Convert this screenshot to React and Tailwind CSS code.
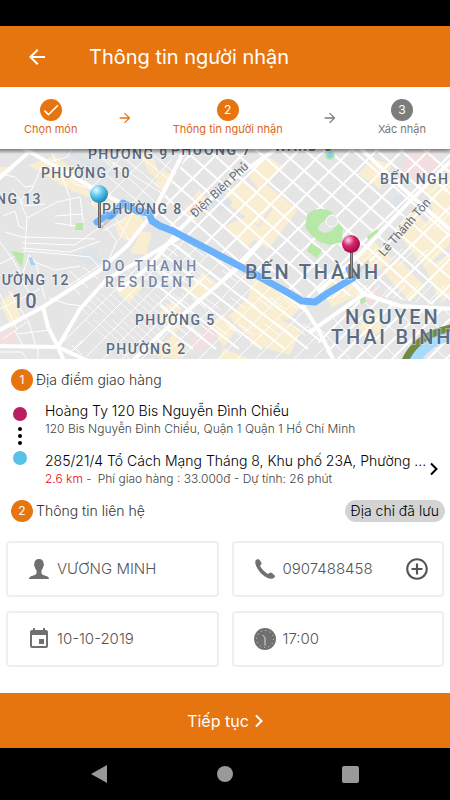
import React, { useState } from 'react';
import { MdAddCircleOutline, MdArrowBack, MdArrowForward, MdCheck, MdEvent } from 'react-icons/md';

// ==========================================
// 1. MAP DATA
// ==========================================
const ROUTE = 'M97 73 L107 66 L111 67 L123 54 L137 62 L149 64 L152 72 L160 77 L173 82 L247 121 L285 142 L302 152 L315 153 L328 144 L353 129 L349 120';

const MAIN_ROADS = [
    'M18 -4 L100 43 L123 55 L150 68',
    'M-4 183 L43 158 L100 121 L128 96 L142 78 L152 66 L188 -6',
    'M43 158 L48 178 L58 198 L64 212',
    'M-4 197 L58 198 L88 212',
    'M58 198 L80 160 L107 130 L148 107 L180 88',
    'M-4 32 L30 2',
    'M285 -6 L228 33 L180 80 L150 117 L118 142',
    'M128 216 L166 180 L240 117 L262 92',
    'M455 8 L408 54 L358 107 L318 143',
    'M302 155 L318 180 L336 216',
    'M310 183 L364 145 L400 157 L455 160',
    'M364 145 L345 125',
    'M355 -6 L400 37 L455 85',
];

const MINOR_ROADS = [
    'M0 115 L25 102 L60 105 L90 108 L99 118',
    'M25 102 L27 69 L20 52 L32 40 L42 17 L62 22',
    'M5 83 L22 88 L95 90 M22 94 L75 96 L100 78 M22 99 L70 103 L100 92',
    'M57 53 L80 48 L84 79 M55 67 L83 65 M55 74 L83 78 M70 51 L71 78 M27 69 L57 53',
    'M0 25 L15 28 L25 38 L33 37 M3 67 L15 62 L19 77 L25 80 M12 40 L25 57 L45 55',
    'M62 22 L75 35 L90 40 L93 55 M45 14 L67 8 L74 -4 M52 4 L60 22 L70 49',
    'M0 93 L13 111 L22 127 L29 106 M29 106 L37 114 L55 121 L80 117',
    'M0 145 L17 180 M9 142 L27 171 M20 128 L38 160 M36 114 L45 150 M0 160 L40 140',
    'M15 182 L23 197 M28 171 L36 197 M3 190 L27 173 M17 185 L50 181',
    'M60 125 L80 146 M70 122 L88 139 M83 118 L98 130 M65 139 L105 113 M49 149 L67 155 L82 157',
    'M103 23 L150 63 M112 13 L168 48 M97 4 L111 17 M90 40 L134 -4 M107 48 L154 1 M128 59 L172 10',
    'M97 0 L154 52 M116 2 L159 38 M132 0 L168 30 M146 0 L176 25',
    'M101 73 L117 92 L108 112 M116 70 L129 91 M132 65 L119 91 M103 82 L126 69',
    'M0 203 L22 203 L28 212 M38 198 L38 212 M68 205 L83 191 M72 196 L82 206',
];

const BUILDINGS = [
    '28,16 55,7 76,22 93,50 72,42', '90,55 103,47 118,57 104,68', '115,76 135,60 146,76 128,92 119,88',
    '130,104 141,82 152,84 146,106', '137,0 151,0 161,31 150,25', '154,35 164,20 174,30 164,45',
    '247,25 269,8 283,17 266,35 298,61 268,100 251,88 273,60', '223,45 245,31 273,55 258,76 233,59',
    '185,60 199,40 207,53 196,72', '225,77 247,68 263,82 245,100', '372,10 392,15 380,40 358,25',
    '425,38 450,20 450,96 423,83 433,61', '395,81 413,62 450,95 426,120', '354,107 373,92 392,109 377,123',
    '318,138 342,122 364,144 332,158', '253,126 278,136 304,156 288,171 247,154', '228,167 248,149 284,170 259,198',
    '250,195 268,164 301,181 290,206', '185,141 203,124 216,133 201,151', '157,166 173,152 186,169 174,186',
    '208,175 223,165 237,180 224,198', '382,122 399,110 425,138 410,153', '0,154 12,143 22,171 12,180',
    '114,139 131,125 143,137 130,154', '223,199 249,210 219,210', '358,178 378,160 382,180 368,192',
    '425,118 450,106 450,148 438,149', '0,18 15,18 8,25 0,25', '151,205 174,185 187,205 176,210',
];

const CIVIC = [
    '405,10 432,0 439,15 427,39 400,29', '191,190 209,175 218,185 206,200 192,201', '0,183 17,180 14,199 0,198',
    '186,54 200,47 196,65', '362,148 374,138 382,144 371,155',
];

const MAP_LABELS = [
    { text: 'PHƯỜNG 9', x: 88, y: 10, className: 'text-sm tracking-widest' },
    { text: 'PHƯỜNG 7', x: 171, y: 6, className: 'text-sm tracking-widest' },
    { text: 'WARD 6', x: 274, y: 2, className: 'text-sm tracking-widest' },
    { text: 'PHƯỜNG 10', x: 41, y: 29, className: 'text-sm tracking-widest' },
    { text: 'PHƯỜNG 13', x: -48, y: 55, className: 'text-sm tracking-widest' },
    { text: 'PHƯỜNG 8', x: 102, y: 65, className: 'text-sm tracking-widest' },
    { text: 'BẾN NGHÉ', x: 380, y: 35, className: 'text-sm tracking-widest' },
    { text: 'PHƯỜNG 12', x: -20, y: 136, className: 'text-sm tracking-widest' },
    { text: 'PHƯỜNG 5', x: 135, y: 176, className: 'text-sm tracking-widest' },
    { text: 'PHƯỜNG 2', x: 106, y: 205, className: 'text-sm tracking-widest' },
    { text: '10', x: 12, y: 159, className: 'text-xl tracking-widest' },
    { text: 'BẾN THÀNH', x: 245, y: 130, className: 'text-xl tracking-[0.14em]' },
    { text: 'NGUYEN', x: 345, y: 175, className: 'text-xl tracking-[0.14em]' },
    { text: 'THAI BINH', x: 331, y: 195, className: 'text-xl tracking-[0.14em]' },
];

const parallel = (from, to, step, dx, dy) => {
    let d = '';
    for (let x = from; x <= to; x += step) d += `M${x} -10 l${dx} ${dy} `;
    return d;
};

// ==========================================
// 2. MAP
// ==========================================
const Pin = ({ x, y, fill, stemHeight }) => (
    <g transform={`translate(${x} ${y})`}>
        <path d={`M2 ${stemHeight} L18 ${stemHeight - 17}`} stroke="#555" strokeOpacity="0.2" strokeWidth="3" />
        <rect x="-1" y="5" width="3" height={stemHeight - 5} fill="#666" />
        <rect x="0" y="8" width="1" height={stemHeight - 9} fill="#999" />
        <circle r="9" fill={fill} />
    </g>
);

const DeliveryMap = () => (
    <svg
        viewBox="0 0 450 210"
        preserveAspectRatio="xMidYMid slice"
        className="block w-full h-[210px] bg-[#e5e5e5] font-[Roboto,sans-serif]"
        role="img"
        aria-label="Bản đồ giao hàng"
    >
        <defs>
            <radialGradient id="pinBlue" cx="0.35" cy="0.28" r="0.75">
                <stop offset="0" stopColor="#e4faff" />
                <stop offset="0.45" stopColor="#62c9ee" />
                <stop offset="1" stopColor="#1583b4" />
            </radialGradient>
            <radialGradient id="pinPink" cx="0.35" cy="0.28" r="0.75">
                <stop offset="0" stopColor="#ffd3e4" />
                <stop offset="0.45" stopColor="#d6246b" />
                <stop offset="1" stopColor="#a00645" />
            </radialGradient>
            <linearGradient id="mapShade" x1="0" y1="0" x2="0" y2="1">
                <stop offset="0" stopColor="#000" stopOpacity="0.45" />
                <stop offset="1" stopColor="#000" stopOpacity="0" />
            </linearGradient>
            <clipPath id="northEast">
                <path d="M190 0 H450 V158 L364 145 L315 152 L247 120 L152 70 Z" />
            </clipPath>
            <clipPath id="south">
                <path d="M150 108 L180 86 L247 122 L302 155 L330 210 H130 L165 180 Z" />
            </clipPath>
            <clipPath id="southWest">
                <path d="M62 195 L82 160 L107 131 L155 108 L210 120 L165 178 L130 210 H92 Z" />
            </clipPath>
            <clipPath id="southEast">
                <path d="M310 183 L364 148 L450 162 V210 H332 Z" />
            </clipPath>
        </defs>

        {/* land use */}
        {BUILDINGS.map((points) => <polygon key={points} points={points} fill="#f9eed2" />)}
        {CIVIC.map((points) => <polygon key={points} points={points} fill="#f3dfdf" />)}
        <path d="M70 0 L115 24 L108 29 L64 3 Z M68 107 L97 98 L101 112 L90 116 Z M210 55 L222 42 L233 53 L220 65 Z M392 49 L402 46 L407 55 L397 64 Z" fill="#dde3e9" />

        {/* small streets */}
        <g fill="none" stroke="#fff">
            <g clipPath="url(#northEast)">
                <path d={parallel(180, 670, 26, -280, 280)} strokeWidth="2" />
                <path d={parallel(-20, 450, 24, 250, 220)} strokeWidth="2" />
                <path d={parallel(470, 640, 13, -180, 185)} strokeWidth="1" strokeDasharray="24 27" />
            </g>
            <g clipPath="url(#south)">
                <path d={parallel(210, 540, 19, -240, 240)} strokeWidth="1" />
                <path d={parallel(-100, 330, 23, 270, 210)} strokeWidth="2" />
                <path d={parallel(-90, 330, 13, 270, 210)} strokeWidth="1" strokeDasharray="19 24" />
            </g>
            <g clipPath="url(#southWest)">
                <path d={parallel(-120, 200, 9, 250, 220)} strokeWidth="1" strokeDasharray="32 7" strokeOpacity="0.7" />
                <path d={parallel(190, 420, 19, -240, 240)} strokeWidth="1" />
            </g>
            <g clipPath="url(#southEast)">
                <path d={parallel(450, 740, 18, -230, 230)} strokeWidth="2" />
                <path d={parallel(130, 420, 24, 220, 220)} strokeWidth="1" />
            </g>
            {MINOR_ROADS.map((d) => <path key={d} d={d} strokeWidth="1" />)}
        </g>

        {/* parks and water */}
        <path d="M307 66 C312 59 325 58 332 63 L334 68 L343 79 L342 93 L330 96 L320 93 L311 86 L305 78 Z" fill="#b8e8a8" />
        <path d="M319 76 L325 71 L332 75 L333 81 L325 84 L318 81 Z" fill="#e5e5e5" />
        <circle cx="332" cy="72" r="6" fill="#e5e5e5" stroke="#fff" />
        <path d="M311 94 L322 101 L317 109 L307 102 Z M367 87 L377 80 L379 83 L368 91 Z M76 74 L84 74 L83 81 L75 81 Z M11 102 L24 104 L22 119 Z M359 149 L365 148 L366 153 L361 155 Z" fill="#b8e8a8" />
        <circle cx="330" cy="6" r="4" fill="#8ecdf8" stroke="#b8e8a8" strokeWidth="2" />
        <path d="M29 109 C31 107 33 108 33 113 L36 116 L31 116 Z" fill="#9dd2fa" />

        <g fill="none" stroke="#fff" strokeWidth="4" strokeLinejoin="round">
            {MAIN_ROADS.map((d) => <path key={d} d={d} />)}
        </g>

        <path d="M412 214 C422 196 433 189 455 184" fill="none" stroke="#a8dafc" strokeWidth="13" />
        <path d="M404 214 C412 195 426 184 455 178" fill="none" stroke="#718b45" strokeWidth="7" />

        <path d={ROUTE} fill="none" stroke="#6bb1fc" strokeWidth="7" strokeLinejoin="round" strokeLinecap="round" />

        {/* place names */}
        <g fill="#5b6c82" stroke="#fff" strokeWidth="2" strokeOpacity="0.4" className="font-medium [paint-order:stroke]">
            {MAP_LABELS.map(({ text, x, y, className }) => (
                <text key={text} x={x} y={y} className={className}>{text}</text>
            ))}
            <g fill="#7687a5" className="text-sm tracking-[0.25em]">
                <text x="102" y="122">DO THANH</text>
                <text x="105" y="138">RESIDENT</text>
            </g>
        </g>
        <g fill="#5f6b79" className="text-xs">
            <text transform="translate(195 69) rotate(-43)">Điện Biên Phủ</text>
            <text transform="translate(384 108) rotate(-49)">Lê Thánh Tôn</text>
        </g>

        <Pin x={99} y={45} fill="url(#pinBlue)" stemHeight={34} />
        <Pin x={351} y={95} fill="url(#pinPink)" stemHeight={34} />
        <rect width="450" height="5" fill="url(#mapShade)" />
    </svg>
);

// ==========================================
// 3. ICONS
// ==========================================
const PersonIcon = () => (
    <svg viewBox="0 0 20 20" className="w-5 h-5" fill="currentColor" aria-hidden="true">
        <path d="M10 0 C6.800 0 5.200 2 5.300 5 C4.800 5.200 5 7 5.700 7.500 C6 9.500 7 10.700 7.500 11.500 L7.500 14 C7.300 15.600 5.800 16 3.500 16.700 C1.200 17.400 0 18.200 0 20 H20 C20 18.200 18.800 17.400 16.500 16.700 C14.200 16 12.700 15.600 12.500 14 L12.500 11.500 C13 10.700 14 9.500 14.300 7.500 C15 7 15.200 5.200 14.700 5 C14.800 2 13.200 0 10 0 Z" />
    </svg>
);

const PhoneIcon = () => (
    <svg viewBox="0 0 20 20" className="w-5 h-5" fill="currentColor" aria-hidden="true">
        <path d="M3 0 C1 .3 0 2 .3 4 C1.500 11 9 19 16 19.800 C18 20 19.700 19 20 17.300 C20.100 16.500 16.800 13.800 15.700 13.600 C14.500 13.500 14 15 12.900 14.900 C10.500 14 6 9.500 5.200 7.100 C5.100 6 6.700 5.600 6.600 4.300 C6.500 3.200 4 0 3 0 Z" />
    </svg>
);

const ClockIcon = () => (
    <svg viewBox="0 0 22 22" className="w-[22px] h-[22px]" aria-hidden="true">
        <circle cx="11" cy="11" r="11" fill="currentColor" />
        <circle cx="11" cy="11" r="8.500" fill="none" stroke="#ddd" strokeWidth="1" strokeDasharray="1 3.450" />
        <path d="M8.500 7 L11 9.500 V17.500" fill="none" stroke="#ddd" strokeWidth="1" />
    </svg>
);

const ChevronIcon = ({ className }) => (
    <svg viewBox="0 0 8 14" className={className} fill="none" stroke="currentColor" strokeWidth="2" aria-hidden="true">
        <path d="M1 1.500 L6.500 7 L1 12.500" />
    </svg>
);

// ==========================================
// 4. SMALL PARTS
// ==========================================
const Step = ({ label, children, active }) => (
    <li className={`flex flex-col items-center text-[11px] leading-4 ${active ? 'text-[#d9661a]' : 'text-[#777]'}`}>
        <span className={`flex items-center justify-center w-[22px] h-[22px] rounded-full text-white text-xs ${active ? 'bg-[#e67510]' : 'bg-[#7c7c7c]'}`}>
            {children}
        </span>
        {label}
    </li>
);

const SectionTitle = ({ number, children }) => (
    <h2 className="flex items-center gap-[3px] text-sm font-light text-[#333]">
        <span className="flex items-center justify-center w-[22px] h-[22px] rounded-full bg-[#e67510] text-white text-xs font-normal">
            {number}
        </span>
        {children}
    </h2>
);

const Field = ({ icon, label, value, onChange, type = 'text', children }) => (
    <div className="flex items-center h-14 pl-[19px] pr-3 border-2 border-[#f0eeee] rounded">
        <label className="flex items-center flex-1 min-w-0">
            <span className="flex justify-center w-6 mr-1.5 shrink-0 text-[#707070]">{icon}</span>
            <input
                type={type}
                aria-label={label}
                value={value}
                onChange={onChange}
                className="w-full min-w-0 text-[15px] leading-5 font-light text-[#555] bg-transparent focus:outline-none"
            />
        </label>
        {children}
    </div>
);

// ==========================================
// 5. SCREEN
// ==========================================
const App = () => {
    const [form, setForm] = useState({
        name: 'VƯƠNG MINH',
        phone: '0907488458',
        date: '10-10-2019',
        time: '17:00',
    });

    const update = (key) => (e) => setForm({ ...form, [key]: e.target.value });

    return (
        <div className="min-h-screen flex flex-col bg-white font-[Inter,'Noto_Sans',sans-serif]">
            <div className="h-[26px] bg-black" />
            <header className="flex items-center h-[61px] px-[25px] bg-[#e67510] text-white">
                <button type="button" aria-label="Quay lại">
                    <MdArrowBack className="w-6 h-6" />
                </button>
                <h1 className="ml-10 text-xl font-normal">Thông tin người nhận</h1>
            </header>

            <ol className="flex items-center justify-between h-[62px] px-6">
                <Step label="Chọn món" active><MdCheck className="w-5 h-5" /></Step>
                <li aria-hidden="true"><MdArrowForward className="w-4 h-4 text-[#e67510]" /></li>
                <Step label="Thông tin người nhận" active>2</Step>
                <li aria-hidden="true"><MdArrowForward className="w-4 h-4 text-[#7c7c7c]" /></li>
                <Step label="Xác nhận">3</Step>
            </ol>

            <DeliveryMap />

            <main className="flex-1 pt-2.5 pb-6">
                <div className="px-[11px]">
                    <SectionTitle number="1">Địa điểm giao hàng</SectionTitle>
                </div>

                <div className="flex mt-2.5 pl-[13px] pr-3">
                    <div className="flex flex-col items-center gap-1.5 pt-1.5 w-[14px] shrink-0" aria-hidden="true">
                        <span className="w-[14px] h-[14px] rounded-full bg-[#b91d5f]" />
                        <span className="flex flex-col gap-[3px]">
                            <span className="w-1 h-1 rounded-full bg-black" />
                            <span className="w-1 h-1 rounded-full bg-black" />
                            <span className="w-1 h-1 rounded-full bg-black" />
                        </span>
                        <span className="w-[14px] h-[14px] rounded-full bg-[#59c0e6]" />
                    </div>
                    <div className="flex-1 min-w-0 ml-[18px] flex flex-col gap-3.5 font-light">
                        <div>
                            <p className="text-sm leading-5 text-black">Hoàng Ty 120 Bis Nguyễn Đình Chiểu</p>
                            <p className="text-xs leading-4 text-[#444]">120 Bis Nguyễn Đình Chiểu, Quận 1 Quận 1 Hồ Chí Minh</p>
                        </div>
                        <a href="#address" className="flex items-center">
                            <span className="flex-1 min-w-0">
                                <span className="block text-sm leading-5 text-black">285/21/4 Tổ Cách Mạng Tháng 8, Khu phố 23A, Phường ...</span>
                                <span className="block text-xs leading-4 text-[#444]">
                                    <span className="mr-1.5 text-[#f0000e]">2.6 km -</span>
                                    Phí giao hàng : 33.000đ - Dự tính: 26 phút
                                </span>
                            </span>
                            <ChevronIcon className="w-2 h-3.5 shrink-0 text-black" />
                        </a>
                    </div>
                </div>

                <div className="flex items-center justify-between mt-[13px] pl-[11px] pr-[5px]">
                    <SectionTitle number="2">Thông tin liên hệ</SectionTitle>
                    <button type="button" className="h-[22px] px-1.5 rounded-full bg-[#d3d3d3] text-sm leading-5 font-light text-black">
                        Địa chỉ đã lưu
                    </button>
                </div>

                <form id="contact" className="grid grid-cols-2 gap-x-[13px] gap-y-3.5 mt-[19px] px-1.5" onSubmit={(e) => e.preventDefault()}>
                    <Field icon={<PersonIcon />} label="Họ tên" value={form.name} onChange={update('name')} />
                    <Field icon={<PhoneIcon />} label="Số điện thoại" type="tel" value={form.phone} onChange={update('phone')}>
                        <button type="button" aria-label="Thêm số điện thoại" className="shrink-0 text-[#555]">
                            <MdAddCircleOutline className="w-[26px] h-[26px]" />
                        </button>
                    </Field>
                    <Field icon={<MdEvent className="w-6 h-6" />} label="Ngày giao" value={form.date} onChange={update('date')} />
                    <Field icon={<ClockIcon />} label="Giờ giao" value={form.time} onChange={update('time')} />
                </form>
            </main>

            <button type="submit" form="contact" className="flex items-center justify-center gap-1.5 h-[55px] bg-[#e67510] text-white text-base">
                Tiếp tục
                <ChevronIcon className="w-2 h-3.5" />
            </button>

            <nav className="flex items-center justify-between h-[52px] px-[91px] bg-black text-[#999]">
                <button type="button" aria-label="Trở về">
                    <svg viewBox="0 0 16 18" className="w-4 h-[18px]" fill="currentColor"><path d="M16 0 V18 L0 9 Z" /></svg>
                </button>
                <button type="button" aria-label="Màn hình chính" className="w-4 h-4 rounded-full bg-[#999]" />
                <button type="button" aria-label="Ứng dụng gần đây" className="w-[17px] h-[17px] rounded-xs bg-[#999]" />
            </nav>
        </div>
    );
};

export default App;
